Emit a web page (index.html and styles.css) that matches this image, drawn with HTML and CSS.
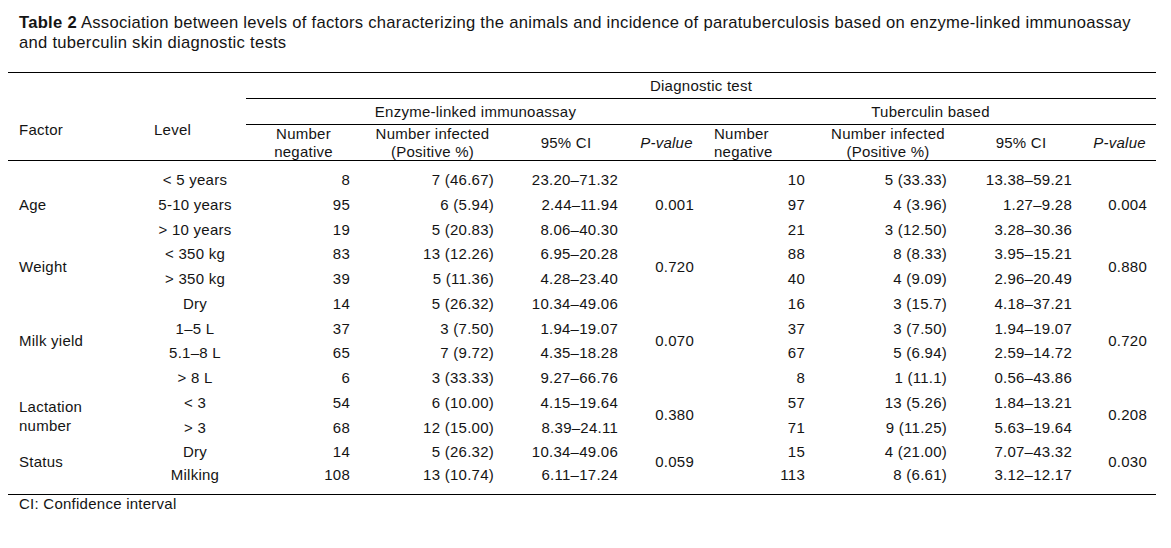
FILE: index.html
```html
<!DOCTYPE html>
<html lang="en">
<head>
<meta charset="utf-8">
<title>Table 2</title>
<link rel="stylesheet" href="styles.css">
</head>
<body>
<div class="page">
  <p class="caption"><b>Table 2</b> Association between levels of factors characterizing the animals and incidence of paratuberculosis based on enzyme-linked immunoassay<br>and tuberculin skin diagnostic tests</p>
  <table class="tbl">
    <colgroup>
      <col class="c-factor"><col class="c-level">
      <col class="c-neg1"><col class="c-inf1"><col class="c-ci1"><col class="c-p1">
      <col class="c-neg2"><col class="c-inf2"><col class="c-ci2"><col class="c-p2">
    </colgroup>
    <thead>
      <tr class="hr1">
        <th colspan="2" class="blank"></th>
        <th colspan="8" class="ruled">Diagnostic test</th>
      </tr>
      <tr class="hr2">
        <th rowspan="2" class="left ruled">Factor</th>
        <th rowspan="2" class="left ruled pl-level">Level</th>
        <th colspan="4" class="ruled">Enzyme-linked immunoassay</th>
        <th colspan="4" class="ruled">Tuberculin based</th>
      </tr>
      <tr class="hr3">
        <th class="ruled">Number<br>negative</th>
        <th class="ruled">Number infected<br>(Positive %)</th>
        <th class="ruled">95% CI</th>
        <th class="ruled it">P-value</th>
        <th class="ruled left pl-neg2">Number<br>negative</th>
        <th class="ruled">Number infected<br>(Positive %)</th>
        <th class="ruled">95% CI</th>
        <th class="ruled it">P-value</th>
      </tr>
    </thead>
    <tbody>
      <tr class="first">
        <td rowspan="3" class="factor">Age</td>
        <td class="level">&lt; 5 years</td>
        <td class="n1">8</td><td class="i1">7 (46.67)</td><td class="ci1">23.20–71.32</td>
        <td rowspan="3" class="p1">0.001</td>
        <td class="n2">10</td><td class="i2">5 (33.33)</td><td class="ci2">13.38–59.21</td>
        <td rowspan="3" class="p2">0.004</td>
      </tr>
      <tr>
        <td class="level">5-10 years</td>
        <td class="n1">95</td><td class="i1">6 (5.94)</td><td class="ci1">2.44–11.94</td>
        <td class="n2">97</td><td class="i2">4 (3.96)</td><td class="ci2">1.27–9.28</td>
      </tr>
      <tr>
        <td class="level">&gt; 10 years</td>
        <td class="n1">19</td><td class="i1">5 (20.83)</td><td class="ci1">8.06–40.30</td>
        <td class="n2">21</td><td class="i2">3 (12.50)</td><td class="ci2">3.28–30.36</td>
      </tr>
      <tr>
        <td rowspan="2" class="factor">Weight</td>
        <td class="level">&lt; 350 kg</td>
        <td class="n1">83</td><td class="i1">13 (12.26)</td><td class="ci1">6.95–20.28</td>
        <td rowspan="2" class="p1">0.720</td>
        <td class="n2">88</td><td class="i2">8 (8.33)</td><td class="ci2">3.95–15.21</td>
        <td rowspan="2" class="p2">0.880</td>
      </tr>
      <tr>
        <td class="level">&gt; 350 kg</td>
        <td class="n1">39</td><td class="i1">5 (11.36)</td><td class="ci1">4.28–23.40</td>
        <td class="n2">40</td><td class="i2">4 (9.09)</td><td class="ci2">2.96–20.49</td>
      </tr>
      <tr>
        <td rowspan="4" class="factor">Milk yield</td>
        <td class="level">Dry</td>
        <td class="n1">14</td><td class="i1">5 (26.32)</td><td class="ci1">10.34–49.06</td>
        <td rowspan="4" class="p1">0.070</td>
        <td class="n2">16</td><td class="i2">3 (15.7)</td><td class="ci2">4.18–37.21</td>
        <td rowspan="4" class="p2">0.720</td>
      </tr>
      <tr>
        <td class="level">1–5 L</td>
        <td class="n1">37</td><td class="i1">3 (7.50)</td><td class="ci1">1.94–19.07</td>
        <td class="n2">37</td><td class="i2">3 (7.50)</td><td class="ci2">1.94–19.07</td>
      </tr>
      <tr>
        <td class="level">5.1–8 L</td>
        <td class="n1">65</td><td class="i1">7 (9.72)</td><td class="ci1">4.35–18.28</td>
        <td class="n2">67</td><td class="i2">5 (6.94)</td><td class="ci2">2.59–14.72</td>
      </tr>
      <tr>
        <td class="level">&gt; 8 L</td>
        <td class="n1">6</td><td class="i1">3 (33.33)</td><td class="ci1">9.27–66.76</td>
        <td class="n2">8</td><td class="i2">1 (11.1)</td><td class="ci2">0.56–43.86</td>
      </tr>
      <tr>
        <td rowspan="2" class="factor tight">Lactation<br>number</td>
        <td class="level">&lt; 3</td>
        <td class="n1">54</td><td class="i1">6 (10.00)</td><td class="ci1">4.15–19.64</td>
        <td rowspan="2" class="p1">0.380</td>
        <td class="n2">57</td><td class="i2">13 (5.26)</td><td class="ci2">1.84–13.21</td>
        <td rowspan="2" class="p2">0.208</td>
      </tr>
      <tr>
        <td class="level">&gt; 3</td>
        <td class="n1">68</td><td class="i1">12 (15.00)</td><td class="ci1">8.39–24.11</td>
        <td class="n2">71</td><td class="i2">9 (11.25)</td><td class="ci2">5.63–19.64</td>
      </tr>
      <tr>
        <td rowspan="2" class="factor endpad">Status</td>
        <td class="level">Dry</td>
        <td class="n1">14</td><td class="i1">5 (26.32)</td><td class="ci1">10.34–49.06</td>
        <td rowspan="2" class="p1 endpad">0.059</td>
        <td class="n2">15</td><td class="i2">4 (21.00)</td><td class="ci2">7.07–43.32</td>
        <td rowspan="2" class="p2 endpad">0.030</td>
      </tr>
      <tr class="last">
        <td class="level">Milking</td>
        <td class="n1">108</td><td class="i1">13 (10.74)</td><td class="ci1">6.11–17.24</td>
        <td class="n2">113</td><td class="i2">8 (6.61)</td><td class="ci2">3.12–12.17</td>
      </tr>
    </tbody>
  </table>
  <p class="note">CI: Confidence interval</p>
</div>
</body>
</html>
```

FILE: styles.css
```css
html, body {
  margin: 0;
  padding: 0;
  background: #ffffff;
}

body {
  font-family: "Liberation Sans", Arial, sans-serif;
  color: #141414;
  font-size: 15px;
  letter-spacing: 0.25px;
}

.page {
  padding: 13px 15px 0 8px;
}

.caption {
  margin: 0 0 19px 11px;
  font-size: 16.6px;
  letter-spacing: 0.28px;
  line-height: 20px;
  white-space: nowrap;
}

.caption b {
  font-weight: bold;
}

.tbl {
  border-collapse: separate;
  border-spacing: 0;
  width: 1148px;
  table-layout: fixed;
  border-top: 1px solid #000;
  border-bottom: 1px solid #000;
}

.c-factor { width: 136px; }
.c-level { width: 102px; }
.c-neg1 { width: 115px; }
.c-inf1 { width: 143px; }
.c-ci1 { width: 124px; }
.c-p1 { width: 77px; }
.c-neg2 { width: 112px; }
.c-inf2 { width: 142px; }
.c-ci2 { width: 124px; }
.c-p2 { width: 73px; }

th {
  font-weight: normal;
  text-align: center;
  vertical-align: middle;
  padding: 0;
}

th.ruled {
  border-bottom: 1px solid #000;
}

.hr1 th {
  line-height: 25px;
}

.hr2 th {
  line-height: 25px;
}

.hr3 th {
  line-height: 17.5px;
  height: 35px;
}

th.left {
  text-align: left;
  padding-left: 11px;
}

th.pl-level {
  padding-left: 10px;
}

th.pl-neg2 {
  padding-left: 9px;
}

.it {
  font-style: italic;
}

td {
  padding: 0;
  line-height: 24.75px;
  vertical-align: middle;
  white-space: nowrap;
}

tr.first td {
  padding-top: 7px;
}

tr.last td {
  line-height: 19.5px;
  padding-bottom: 9.5px;
}

td.endpad {
  padding-bottom: 9.5px;
}

td.factor {
  text-align: left;
  padding-left: 11px;
}

td.factor.tight {
  line-height: 19px;
}

td.level {
  text-align: center;
}

td.n1 { text-align: right; padding-right: 11px; }
td.i1 { text-align: right; padding-right: 10px; }
td.ci1 { text-align: right; padding-right: 10px; }
td.p1 { text-align: right; padding-right: 11px; }
td.n2 { text-align: right; padding-right: 12px; }
td.i2 { text-align: right; padding-right: 12px; }
td.ci2 { text-align: right; padding-right: 11px; }
td.p2 { text-align: right; padding-right: 9px; }

.note {
  margin: 0 0 0 11px;
  line-height: 18px;
}
```
